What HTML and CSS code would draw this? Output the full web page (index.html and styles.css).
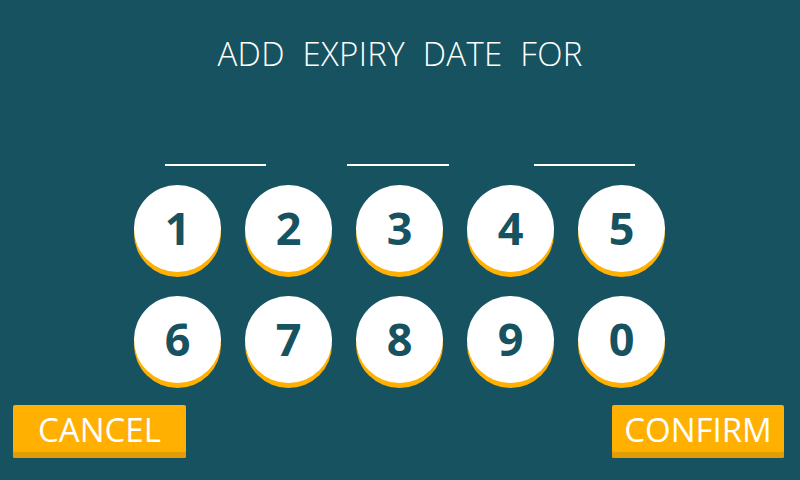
FILE: index.html
```html
<!DOCTYPE html>
<html>
<head>
<meta charset="utf-8">
<link rel="stylesheet" href="styles.css">
</head>
<body>
<div class="screen">
  <h1 class="title">ADD&nbsp; EXPIRY&nbsp; DATE&nbsp; FOR</h1>
  <div class="slots">
    <span class="slot s1"></span>
    <span class="slot s2"></span>
    <span class="slot s3"></span>
  </div>
  <div class="keypad">
    <div class="key">1</div>
    <div class="key">2</div>
    <div class="key">3</div>
    <div class="key">4</div>
    <div class="key">5</div>
    <div class="key">6</div>
    <div class="key">7</div>
    <div class="key">8</div>
    <div class="key">9</div>
    <div class="key">0</div>
  </div>
  <div class="actions">
    <div class="btn cancel">CANCEL</div>
    <div class="btn confirm">CONFIRM</div>
  </div>
</div>
</body>
</html>
```
FILE: styles.css
```css
* { box-sizing: border-box; }
html, body { margin: 0; padding: 0; }
body {
  width: 800px;
  height: 480px;
  background: #175260;
  font-family: "Open Sans", "Liberation Sans", sans-serif;
  overflow: hidden;
}
.screen {
  display: flex;
  flex-direction: column;
  width: 800px;
  height: 480px;
}
.title {
  margin: 0;
  padding-top: 34px;
  height: 100px;
  text-align: center;
  color: #ffffff;
  font-weight: 300;
  font-size: 33px;
  line-height: 40px;
  letter-spacing: 0.3px;
}
.slots {
  display: flex;
  padding-left: 165px;
  margin-top: 64px;
  height: 2px;
}
.slot {
  display: block;
  width: 101px;
  height: 2px;
  background: #ffffff;
}
.s2 { margin-left: 81px; width: 102px; }
.s3 { margin-left: 85px; }
.keypad {
  display: grid;
  grid-template-columns: repeat(5, 87px);
  grid-auto-rows: 87px;
  column-gap: 24px;
  row-gap: 24px;
  padding-left: 134px;
  margin-top: 19px;
}
.key {
  width: 87px;
  height: 87px;
  border-radius: 50%;
  background: #ffffff;
  box-shadow: 0 5px 0 #ffb000;
  color: #175260;
  font-weight: 700;
  font-size: 45px;
  display: flex;
  align-items: center;
  justify-content: center;
  line-height: 1;
  padding-bottom: 2px;
}
.actions {
  display: flex;
  justify-content: space-between;
  padding: 0 16px 0 13px;
  margin-top: 22px;
}
.btn {
  height: 53px;
  background: #ffb000;
  border-radius: 2px;
  box-shadow: inset 0 -6px 0 #e19c06;
  color: #ffffff;
  font-size: 33px;
  line-height: 50px;
  text-align: center;
  padding-bottom: 4px;
}
.cancel { width: 173px; }
.confirm { width: 172px; }
```
